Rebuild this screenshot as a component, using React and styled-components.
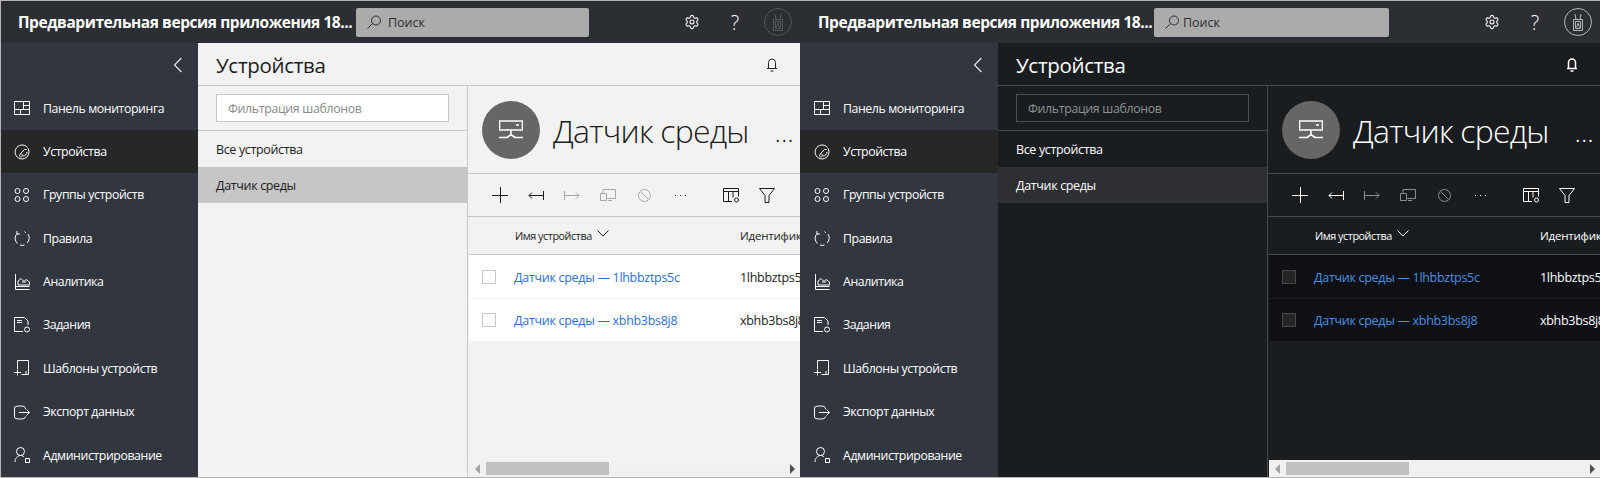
import React from 'react';
import styled, { createGlobalStyle, ThemeProvider } from 'styled-components';
import { Settings } from 'lucide-react';

const lightTheme = {
  main: '#f2f2f2',
  text: '#1c1c1c',
  line: '#c8c8c8',
  inputBg: '#ffffff',
  inputBorder: '#c8c8c8',
  placeholder: '#8a8a8a',
  selected: '#c6c6c6',
  rowBg: '#ffffff',
  rowLine: '#f1f1f1',
  link: '#2b6fd6',
  checkBorder: '#c8c8c8',
  checkBg: '#ffffff',
  muted: '#a8a8a8',
  avatar: '#54575a',
  bell: '#222222',
  bellStroke: 1,
  searchLeft: 355,
  searchWidth: 233,
  searchGap: 7,
};

const darkTheme = {
  main: '#1a1d1f',
  text: '#ffffff',
  line: '#474a4c',
  inputBg: '#1a1d1f',
  inputBorder: '#4c4f51',
  placeholder: '#8f9193',
  selected: '#2e2f32',
  rowBg: '#0e1013',
  rowLine: '#1b1d20',
  link: '#4a90e2',
  checkBorder: '#46484a',
  checkBg: '#232527',
  muted: '#8b8d8f',
  avatar: '#b4b6b8',
  bell: '#ffffff',
  bellStroke: 1.5,
  searchLeft: 354,
  searchWidth: 235,
  searchGap: 4,
};

const GlobalStyle = createGlobalStyle`
  html, body {
    margin: 0;
    padding: 0;
    background: #2b2e32;
  }
  body {
    font-family: 'Open Sans', 'Noto Sans', sans-serif;
    overflow: hidden;
  }
`;

const Page = styled.div`
  display: grid;
  grid-template-columns: 800px 800px;
  width: 1600px;
  height: 478px;
  overflow: hidden;
`;

const Shell = styled.div`
  display: flex;
  flex-direction: column;
  height: 478px;
  box-sizing: border-box;
  border-top: 1px solid #b5b5b5;
  border-bottom: 1px solid #b5b5b5;
  border-left: ${({ $edge }) => ($edge ? '1px solid #b5b5b5' : '0')};
  overflow: hidden;
`;

const Header = styled.header`
  display: flex;
  align-items: center;
  flex: 0 0 42px;
  background: #2b2e32;
  color: #fff;
`;

const AppName = styled.div`
  flex: 0 0 ${({ theme }) => theme.searchLeft}px;
  padding-left: ${({ $edge }) => ($edge ? 17 : 18)}px;
  box-sizing: border-box;
  font-size: 15.5px;
  font-weight: 700;
  letter-spacing: -0.43px;
  white-space: nowrap;
`;

const Search = styled.div`
  display: flex;
  align-items: center;
  gap: ${({ theme }) => theme.searchGap}px;
  width: ${({ theme }) => theme.searchWidth}px;
  height: 29px;
  padding-left: 11px;
  box-sizing: border-box;
  border-radius: 2px;
  background: #ababab;
  color: #2b2e32;
  font-size: 12.5px;
`;

const HeaderActions = styled.div`
  display: flex;
  margin-left: auto;
`;

const HeaderButton = styled.div`
  display: flex;
  align-items: center;
  justify-content: center;
  width: 43.3px;
  height: 42px;
  color: #fff;
  font-size: 20px;
  font-weight: 300;
`;

const Avatar = styled.div`
  display: flex;
  align-items: center;
  justify-content: center;
  width: 28px;
  height: 28px;
  box-sizing: border-box;
  border: 1px solid ${({ theme }) => theme.avatar};
  border-radius: 50%;
  color: ${({ theme }) => theme.avatar};
`;

const Body = styled.div`
  display: flex;
  flex: 1;
  min-height: 0;
`;

const Sidebar = styled.nav`
  flex: 0 0 ${({ $edge }) => ($edge ? 197 : 198)}px;
  background: #31363f;
  color: #fff;
`;

const Collapse = styled.div`
  display: flex;
  align-items: center;
  justify-content: flex-end;
  height: 43.6px;
  padding-right: 11px;
  color: #dfe6ee;
`;

const NavItem = styled.div`
  display: flex;
  align-items: center;
  gap: 13px;
  height: 43.35px;
  padding-left: ${({ $edge }) => ($edge ? 13 : 14)}px;
  background: ${({ $active }) => ($active ? '#262729' : 'transparent')};
  font-size: 12.3px;
  letter-spacing: -0.4px;
  white-space: nowrap;
`;

const Main = styled.main`
  display: flex;
  flex-direction: column;
  flex: 1;
  min-width: 0;
  background: ${({ theme }) => theme.main};
  color: ${({ theme }) => theme.text};
`;

const TitleBar = styled.div`
  display: flex;
  align-items: center;
  justify-content: space-between;
  flex: 0 0 40px;
  padding: 2px 20px 0 18px;
  border-bottom: 1px solid ${({ theme }) => theme.line};
`;

const PageTitle = styled.h1`
  margin: 0;
  font-size: 20.5px;
  font-weight: 400;
  letter-spacing: -0.3px;
`;

const BellIcon = styled.svg`
  color: ${({ theme }) => theme.bell};
  stroke-width: ${({ theme }) => theme.bellStroke};
`;

const Split = styled.div`
  display: flex;
  flex: 1;
  min-height: 0;
`;

const TemplateList = styled.aside`
  flex: 0 0 269px;
  border-right: 1px solid ${({ theme }) => theme.line};
`;

const FilterBox = styled.div`
  padding: 8px 18px;
  border-bottom: 1px solid ${({ theme }) => theme.line};
`;

const FilterInput = styled.div`
  display: flex;
  align-items: center;
  height: 28px;
  padding-left: 11px;
  box-sizing: border-box;
  background: ${({ theme }) => theme.inputBg};
  border: 1px solid ${({ theme }) => theme.inputBorder};
  color: ${({ theme }) => theme.placeholder};
  font-size: 12.3px;
  letter-spacing: -0.3px;
`;

const TemplateItem = styled.div`
  display: flex;
  align-items: center;
  height: 36px;
  padding-left: 18px;
  background: ${({ $selected, theme }) => ($selected ? theme.selected : 'transparent')};
  font-size: 12.5px;
  letter-spacing: -0.35px;
`;

const Detail = styled.section`
  display: flex;
  flex-direction: column;
  flex: 1;
  min-width: 0;
  overflow: hidden;
`;

const DeviceHead = styled.div`
  display: flex;
  align-items: center;
  flex: 0 0 87px;
  padding-left: 14px;
  border-bottom: 1px solid ${({ theme }) => theme.line};
`;

const DeviceBadge = styled.div`
  display: flex;
  align-items: center;
  justify-content: center;
  flex: 0 0 58px;
  height: 58px;
  border-radius: 50%;
  background: #666666;
  color: #fff;
`;

const DeviceName = styled.div`
  margin: 2px 0 0 13px;
  font-size: 32px;
  font-weight: 300;
  letter-spacing: -0.8px;
  white-space: nowrap;
`;

const DeviceMore = styled.div`
  margin: 5px 0 0 26px;
  font-size: 25px;
  font-weight: 300;
  letter-spacing: 0.5px;
  line-height: 1;
`;

const Toolbar = styled.div`
  display: flex;
  align-items: center;
  flex: 0 0 42px;
  padding-left: 14px;
  border-bottom: 1px solid ${({ theme }) => theme.line};
`;

const ToolButton = styled.div`
  display: flex;
  align-items: center;
  justify-content: center;
  flex: 0 0 36px;
  height: 36px;
  margin-left: ${({ $gap }) => $gap || 0}px;
  color: ${({ $muted, theme }) => ($muted ? theme.muted : theme.text)};
`;

const ColumnRow = styled.div`
  display: flex;
  align-items: center;
  flex: 0 0 37px;
  border-bottom: 1px solid ${({ theme }) => theme.line};
  margin-left: 1px;
  font-size: 10.8px;
  letter-spacing: -0.45px;
`;

const NameHead = styled.div`
  display: flex;
  align-items: center;
  gap: 5px;
  flex: 0 0 271px;
  padding-left: 46px;
  box-sizing: border-box;
`;

const IdCell = styled.div`
  padding-top: 1px;
  white-space: nowrap;
`;

const HeadId = styled(IdCell)`
  padding-top: 0;
  font-size: 11.5px;
  letter-spacing: -0.2px;
`;

const Row = styled.div`
  display: flex;
  align-items: center;
  height: 43px;
  margin-left: 1px;
  background: ${({ theme }) => theme.rowBg};
  border-bottom: 1px solid ${({ theme }) => theme.rowLine};
  font-size: 12.5px;
  letter-spacing: -0.3px;
  white-space: nowrap;

  &:last-of-type {
    height: 42px;
  }
`;

const Checkbox = styled.span`
  flex: 0 0 14px;
  height: 14px;
  margin: 0 18px 0 13px;
  box-sizing: border-box;
  border: 1px solid ${({ theme }) => theme.checkBorder};
  background: ${({ theme }) => theme.checkBg};
`;

const DeviceLink = styled.a`
  flex: 0 0 226px;
  padding-top: 1px;
  color: ${({ theme }) => theme.link};
`;

const Spacer = styled.section`
  flex: 1;
`;

const ScrollBar = styled.section`
  display: flex;
  align-items: center;
  flex: 0 0 17px;
  margin-left: 1px;
  background: #f1f1f1;
`;

const ScrollThumb = styled.div`
  width: 123px;
  height: 13px;
  background: #c1c1c1;
`;

const Arrow = styled.span`
  flex: 0 0 0;
  border-style: solid;
  border-width: 5px 0;
  border-color: transparent;
  ${({ $right }) =>
    $right
      ? 'border-left: 5px solid #505050; margin: 0 5px 0 auto;'
      : 'border-right: 5px solid #a3a3a3; margin: 0 6px 0 6px;'}
`;

const Line = ({ d, size = 16, sw = 1, vb = 16 }) => (
  <svg width={size} height={size} viewBox={`0 0 ${vb} ${vb}`} fill="none" stroke="currentColor" strokeWidth={sw}>
    <path d={d} />
  </svg>
);

const icons = {
  dash: 'M.5 1.500h15v13H.5zM.5 9.500h15M9.500 1.500v8M9.500 5.500h6M6.500 9.500v5',
  device: 'M13.500 3.500A7 7 0 1 0 8 15 7 7 0 0 0 15 8c0-1.500-.4-2.600-1-3.600M5.500 11.500a1.500 1.500 0 1 0 0-.1M6.500 9.500l4-4h2M9 12c2 0 4-1.500 4-4',
  groups: 'M6 4a2.500 2.500 0 1 1-5 0 2.500 2.500 0 0 1 5 0zM14.500 4a2.500 2.500 0 1 1-5 0 2.500 2.500 0 0 1 5 0zM6 12a2.500 2.500 0 1 1-5 0 2.500 2.500 0 0 1 5 0zM14.500 12a2.500 2.500 0 1 1-5 0 2.500 2.500 0 0 1 5 0z',
  rules: 'M3 3.500A7 7 0 0 0 3.500 13.500M6 15c1.500.500 3 .500 4.500 0M13 13a7 7 0 0 0 1-9M10.500 1.500l1.500 1.500M3 1v3h3',
  analytics: 'M1.500 0v15.500h14M1.500 12.500h14M4 11V7l3-2.500 3 3 2-2 3.500 2.500v3zM8 8h4',
  jobs: 'M9 14.500H.5v-14h10l3.500 3.500v4M3 3.500h5M3 5.500h5M15.500 12.500a2.500 2.500 0 1 1-5 0 2.500 2.500 0 0 1 5 0z',
  templates: 'M3.500 9V.5h11v14h-7M0 12.500h7M3.500 9.500v6M12 11v4',
  exportData: 'M11.500 5C11.500 2.500 9.500 2 6 2S.5 2.500.5 4v9c0 1.500 2 2 5.500 2s5.500-.500 5.500-2.500M5 8.500h10.500M12.500 5.500l3 3-3 3',
  admin: 'M10.500 4.500a4 4 0 1 1-8 0 4 4 0 0 1 8 0zM1 15c0-3.500 2.500-6.500 5.500-6.500 1.500 0 2.500.500 3.500 1.500M11.500 11.500h4v4h-4z',
  badge: 'M4.500 6.500h9v11h-9zM6 1l1 5.500M12 1l-1 5.500M6.500 15.500h5v-7h-5zM7.500 14.500L9 10l1.500 4.500',
  device2: 'M.5 3h23v9H.5zM17 7h3M12 12v5M0 19.500h8M16 19.500h8M8 19.500l4-3 4 3',
  plus: 'M0 8.500h16M8.500 0v16',
  disconnect: 'M15.500 4v9M15 8.500H1M4 5.500l-3 3 3 3',
  connect: 'M.5 4v9M1 8.500h14M12 5.500l3 3-3 3',
  migrate: 'M3 6.500V2.500h12.500v9h-8M.5 6.500h6v7h-6zM8 13.500h4',
  block: 'M14.500 8.500a6 6 0 1 1-12 0 6 6 0 0 1 12 0zM4.500 4.500l8 8',
  more: 'M3 8.500h1M8 8.500h1M13 8.500h1',
  columns: 'M9 14.500H.5v-13h15v8M.5 4.500h15M5.500 4.500v10M10 4.500v6M15.500 13a2 2 0 1 1-4 0 2 2 0 0 1 4 0z',
  filter: 'M.5 1.500h15l-5.500 7v7H6v-7z',
};

const navItems = [
  ['Панель мониторинга', 'dash'],
  ['Устройства', 'device', true],
  ['Группы устройств', 'groups'],
  ['Правила', 'rules'],
  ['Аналитика', 'analytics'],
  ['Задания', 'jobs'],
  ['Шаблоны устройств', 'templates'],
  ['Экспорт данных', 'exportData'],
  ['Администрирование', 'admin'],
];

const tools = [
  ['plus', false, 0],
  ['disconnect', false, 0],
  ['connect', true, 0],
  ['migrate', true, 0],
  ['block', true, 0],
  ['more', false, 0],
  ['columns', false, 15],
  ['filter', false, 0],
];

const devices = [
  ['Датчик среды — 1lhbbztps5c', '1lhbbztps5c'],
  ['Датчик среды — xbhb3bs8j8', 'xbhb3bs8j8'],
];

const AppPanel = ({ theme, edge }) => (
  <ThemeProvider theme={theme}>
    <Shell $edge={edge}>
      <Header>
        <AppName $edge={edge}>Предварительная версия приложения 18...</AppName>
        <Search>
          <Line d="M13.500 5.500a4.500 4.500 0 1 1-9 0 4.500 4.500 0 0 1 9 0zM5.500 8.500L.5 13.500" size={14} vb={14} />
          Поиск
        </Search>
        <HeaderActions>
          <HeaderButton>
            <Settings size={16} strokeWidth={1.6} />
          </HeaderButton>
          <HeaderButton>?</HeaderButton>
          <HeaderButton>
            <Avatar>
              <Line d={icons.badge} size={18} vb={18} />
            </Avatar>
          </HeaderButton>
        </HeaderActions>
      </Header>
      <Body>
        <Sidebar $edge={edge}>
          <Collapse>
            <Line d="M10.500 1L3.500 8l7 7" sw={1.2} />
          </Collapse>
          {navItems.map(([label, icon, active]) => (
            <NavItem key={label} $active={active} $edge={edge}>
              <Line d={icons[icon]} />
              {label}
            </NavItem>
          ))}
        </Sidebar>
        <Main>
          <TitleBar>
            <PageTitle>Устройства</PageTitle>
            <BellIcon width="16" height="16" viewBox="0 0 16 16" fill="none" stroke="currentColor">
              <path d="M4.500 11V5.500a3.500 3.500 0 0 1 7 0V11M3 11.500h10M6.500 14h3" />
            </BellIcon>
          </TitleBar>
          <Split>
            <TemplateList>
              <FilterBox>
                <FilterInput>Фильтрация шаблонов</FilterInput>
              </FilterBox>
              <TemplateItem>Все устройства</TemplateItem>
              <TemplateItem $selected>Датчик среды</TemplateItem>
            </TemplateList>
            <Detail>
              <DeviceHead>
                <DeviceBadge>
                  <Line d={icons.device2} size={24} vb={24} sw={1.6} />
                </DeviceBadge>
                <DeviceName>Датчик среды</DeviceName>
                <DeviceMore>...</DeviceMore>
              </DeviceHead>
              <Toolbar>
                {tools.map(([icon, muted, gap]) => (
                  <ToolButton key={icon} $muted={muted} $gap={gap}>
                    <Line d={icons[icon]} />
                  </ToolButton>
                ))}
              </Toolbar>
              <ColumnRow>
                <NameHead>
                  Имя устройства
                  <Line d="M.5 .5l5.500 5.500L11.500 .5" size={12} vb={12} />
                </NameHead>
                <HeadId>Идентификатор устройства</HeadId>
              </ColumnRow>
              {devices.map(([name, id]) => (
                <Row key={id}>
                  <Checkbox />
                  <DeviceLink>{name}</DeviceLink>
                  <IdCell>{id}</IdCell>
                </Row>
              ))}
              <Spacer />
              <ScrollBar>
                <Arrow />
                <ScrollThumb />
                <Arrow $right />
              </ScrollBar>
            </Detail>
          </Split>
        </Main>
      </Body>
    </Shell>
  </ThemeProvider>
);

const App = () => (
  <>
    <GlobalStyle />
    <Page>
      <AppPanel theme={lightTheme} edge />
      <AppPanel theme={darkTheme} />
    </Page>
  </>
);

export default App;
